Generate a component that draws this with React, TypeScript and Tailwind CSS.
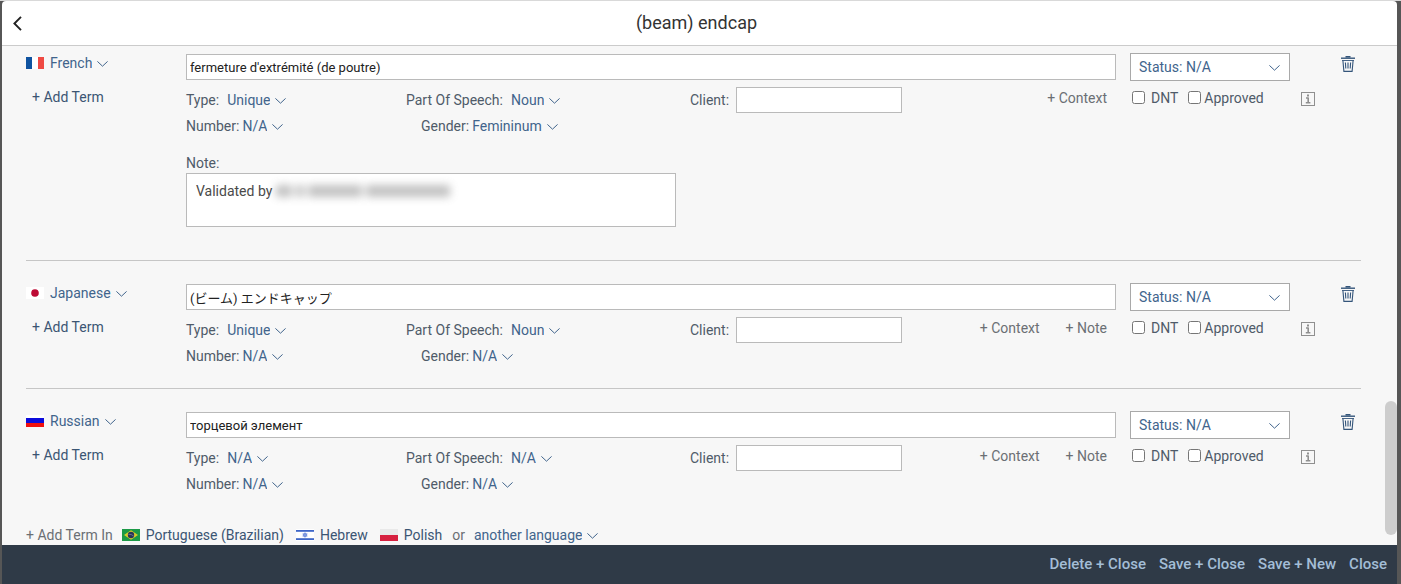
import React from "react";

type FlagCode = "fr" | "jp" | "ru" | "br" | "il" | "pl";

function Flag({ code }: { code: FlagCode }) {
  return (
    <svg width="18" height="12" viewBox="0 0 18 12" aria-hidden="true" className="shrink-0">
      {code === "fr" && (
        <>
          <rect width="18" height="12" fill="#fff" />
          <rect width="6" height="12" fill="#0f53a0" />
          <rect x="12" width="6" height="12" fill="#ef4a43" />
        </>
      )}
      {code === "jp" && (
        <>
          <rect width="18" height="12" fill="#fff" />
          <circle cx="9" cy="6" r="3.8" fill="#bd0a34" />
        </>
      )}
      {code === "ru" && (
        <>
          <rect width="18" height="12" fill="#fff" />
          <rect y="3" width="18" height="5" fill="#0c0cdc" />
          <rect y="8" width="18" height="4" fill="#f01010" />
        </>
      )}
      {code === "br" && (
        <>
          <rect width="18" height="12" fill="#1c9a47" />
          <path d="M2 6 9 1.2 16 6 9 10.8Z" fill="#d9cb2a" />
          <circle cx="9" cy="6" r="3.2" fill="#2b3458" />
          <path d="M6.4 5.3Q9.5 5 11.6 7" fill="none" stroke="#8f9bb0" strokeWidth="0.6" />
        </>
      )}
      {code === "il" && (
        <>
          <rect width="18" height="12" fill="#fff" />
          <rect y="1" width="18" height="1.8" fill="#3e66c8" />
          <rect y="9.2" width="18" height="1.8" fill="#3e66c8" />
          <path d="M9 3.6 11.2 7.2H6.8ZM9 8.4 6.8 4.8h4.4Z" fill="#8fa8e6" stroke="#6485d8" strokeWidth="0.6" />
        </>
      )}
      {code === "pl" && (
        <>
          <rect width="18" height="6" fill="#e9e9e9" />
          <rect y="6" width="18" height="6" fill="#d6203f" />
        </>
      )}
    </svg>
  );
}

function Chevron() {
  return (
    <svg
      width="11"
      height="6"
      viewBox="0 0 11 6"
      fill="none"
      stroke="#41648c"
      aria-hidden="true"
      className="pointer-events-none -ml-3 mt-0.5 shrink-0"
    >
      <path d="M.4.4 5.5 5.2 10.6.4" />
    </svg>
  );
}

function InlineSelect({ label, options }: { label: string; options: string[] }) {
  return (
    <span className="inline-flex items-center text-[#41648c]">
      <select
        aria-label={label}
        className="h-5 cursor-pointer appearance-none bg-transparent pr-[17px] [field-sizing:content]"
      >
        {options.map((o) => (
          <option key={o}>{o}</option>
        ))}
      </select>
      <Chevron />
    </span>
  );
}

function TrashIcon() {
  return (
    <svg width="14" height="16" viewBox="0 0 14 16" fill="none" stroke="#34557a" aria-hidden="true">
      <path d="M0 2.2h14" strokeWidth="1.4" />
      <path d="M4.5.8h5" strokeWidth="1.6" />
      <path d="M1 4.5h12" strokeWidth="0.9" />
      <path d="M1.9 4.5 2.9 15.4h8.2l1-10.9" strokeWidth="1.1" />
      <path d="M4.4 6.5 4.8 12.5M7 6.5v6M9.6 6.5 9.2 12.5" strokeWidth="1.1" />
    </svg>
  );
}

function InfoIcon() {
  return (
    <svg width="14" height="14" viewBox="0 0 14 14" fill="none" stroke="#8f8f8f" aria-hidden="true">
      <rect x=".5" y=".5" width="13" height="13" />
      <path d="M6 3.5h2" strokeWidth="1.8" />
      <path d="M5 6h2.8M7.2 6v5M4.8 10.8h4.6" strokeWidth="1.6" />
    </svg>
  );
}

type Term = {
  id: string;
  flag: FlagCode;
  language: string;
  text: string;
  kind: string;
  speech: string;
  number: string;
  gender: string;
  note?: string;
};

const terms: Term[] = [
  {
    id: "fr",
    flag: "fr",
    language: "French",
    text: "fermeture d'extrémité (de poutre)",
    kind: "Unique",
    speech: "Noun",
    number: "N/A",
    gender: "Femininum",
    note: "Validated by",
  },
  {
    id: "ja",
    flag: "jp",
    language: "Japanese",
    text: "(ビーム) エンドキャップ",
    kind: "Unique",
    speech: "Noun",
    number: "N/A",
    gender: "N/A",
  },
  {
    id: "ru",
    flag: "ru",
    language: "Russian",
    text: "торцевой элемент",
    kind: "N/A",
    speech: "N/A",
    number: "N/A",
    gender: "N/A",
  },
];

function TermRow({ term }: { term: Term }) {
  return (
    <section className="flex text-[#4f5b69]">
      <div className="w-40 shrink-0">
        <div className="flex h-5 items-center gap-1.5">
          <Flag code={term.flag} />
          <InlineSelect label="Language" options={[term.language]} />
        </div>
        <button type="button" className="ml-1.5 mt-3.5 block h-5 text-[#3b5573]">
          + Add Term
        </button>
      </div>

      <div className="min-w-0 flex-1 pt-px">
        <input
          aria-label={`${term.language} term`}
          defaultValue={term.text}
          className="block h-[26px] w-full border border-[#bababa] bg-white px-[3px] text-[13px] text-[#222]"
        />
        <div className="mt-[7px] flex">
          <div className="grid grid-cols-[220px_284px_auto]">
            <div className="flex h-[26px] items-center gap-2">
              Type:
              <InlineSelect label="Type" options={[term.kind]} />
            </div>
            <div className="flex h-[26px] items-center gap-2">
              Part Of Speech:
              <InlineSelect label="Part Of Speech" options={[term.speech]} />
            </div>
            <label className="flex h-[26px] items-center gap-[7px]">
              Client:
              <input className="h-[26px] w-[166px] border border-[#bababa] bg-white px-1" />
            </label>
            <div className="flex h-[26px] items-center gap-[3px]">
              Number:
              <InlineSelect label="Number" options={[term.number]} />
            </div>
            <div className="flex h-[26px] items-center gap-[3px] pl-[15px]">
              Gender:
              <InlineSelect label="Gender" options={[term.gender]} />
            </div>
          </div>
          <div className="flex h-[22px] flex-1 items-center justify-end gap-[26px] pr-[9px] text-[#6b6f74]">
            <button type="button">+ Context</button>
            {term.note === undefined && <button type="button">+ Note</button>}
          </div>
        </div>
        {term.note !== undefined && (
          <div className="relative mb-3.5 mt-3.5 w-[490px]">
            <label htmlFor={`note-${term.id}`} className="block">
              Note:
            </label>
            <textarea
              id={`note-${term.id}`}
              defaultValue={term.note}
              className="block h-[54px] w-full resize-none border border-[#bababa] bg-white px-[9px] py-[7px] text-[#4a4a4a]"
            />
            <span
              aria-hidden="true"
              className="absolute left-[90px] top-7 flex h-5 items-center gap-1 opacity-40 blur-[4px]"
            >
              <span className="h-3 w-4 bg-[#666]" />
              <span className="h-3 w-2 bg-[#666]" />
              <span className="h-3 w-[54px] bg-[#666]" />
              <span className="h-3 w-[84px] bg-[#666]" />
            </span>
          </div>
        )}
      </div>

      <div className="ml-3.5 w-40 shrink-0">
        <div className="flex h-7 items-center border border-[#a9a9a9] bg-white text-[#41648c]">
          <select
            aria-label="Status"
            className="h-full w-full cursor-pointer appearance-none bg-transparent pl-2"
          >
            <option>Status: N/A</option>
          </select>
          <Chevron />
          <span className="w-[9px] shrink-0" />
        </div>
        <div className="mt-1.5 flex h-[22px] items-center">
          <label className="flex items-center gap-1.5 pl-0.5">
            <input type="checkbox" className="mb-0.5 size-[13px]" />
            DNT
          </label>
          <label className="ml-2.5 flex items-center gap-[3px]">
            <input type="checkbox" className="mb-0.5 size-[13px]" />
            Approved
          </label>
        </div>
      </div>

      <div className="flex w-[71px] shrink-0 flex-col pl-[11px] pr-1.5 pt-[3px]">
        <button type="button" aria-label="Delete term" className="self-end">
          <TrashIcon />
        </button>
        <button type="button" aria-label="Term information" className="mt-5 self-start">
          <InfoIcon />
        </button>
      </div>
    </section>
  );
}

const suggestions: { code: FlagCode; name: string }[] = [
  { code: "br", name: "Portuguese (Brazilian)" },
  { code: "il", name: "Hebrew" },
  { code: "pl", name: "Polish" },
];

export default function App() {
  return (
    <div className="flex h-screen flex-col border-t border-[#d9d9d9] bg-[#565656] pl-0.5 pr-1 font-[Roboto,'Noto_Sans_CJK_JP',sans-serif] text-sm leading-5">
      <header className="flex h-[45px] shrink-0 items-center rounded-t-sm border-b border-[#cbcbcb] bg-white px-[11px]">
        <button type="button" aria-label="Back" className="w-3">
          <svg width="9" height="15" viewBox="0 0 9 15" fill="none" stroke="#222" strokeWidth="1.9" aria-hidden="true">
            <path d="M8 .8 1.4 7.5 8 14.2" />
          </svg>
        </button>
        <h1 className="flex-1 pr-[18px] text-center text-lg text-[#333]">(beam) endcap</h1>
      </header>

      <main className="relative min-h-0 flex-1 overflow-hidden bg-[#f7f7f7] pl-6 pr-9 pt-[7px]">
        {terms.map((term, i) => (
          <div key={term.id} className={i > 0 ? "mt-[19px] border-t border-[#c6c6c6] pt-[22px]" : ""}>
            <TermRow term={term} />
          </div>
        ))}

        <div className="mt-7 flex h-5 items-center whitespace-nowrap text-[#6b6f74]">
          <span className="-mr-px">+ Add Term In</span>
          {suggestions.map((s) => (
            <button key={s.code} type="button" className="ml-2.5 flex items-center gap-1.5 pr-0.5 text-[#3b5573]">
              <Flag code={s.code} />
              {s.name}
            </button>
          ))}
          <span className="ml-2 mr-[9px]">or</span>
          <InlineSelect label="Add term in another language" options={["another language"]} />
        </div>

        <div className="absolute bottom-2.5 right-0 h-[134px] w-3 rounded-full bg-[#cdcdcd]" />
      </main>

      <footer className="flex h-[39px] shrink-0 items-center justify-end gap-[13px] bg-[#2f3a47] pb-px pr-2.5 text-[15px] font-medium text-[#a3bdd6]">
        <button type="button">Delete + Close</button>
        <button type="button">Save + Close</button>
        <button type="button">Save + New</button>
        <button type="button">Close</button>
      </footer>
    </div>
  );
}
